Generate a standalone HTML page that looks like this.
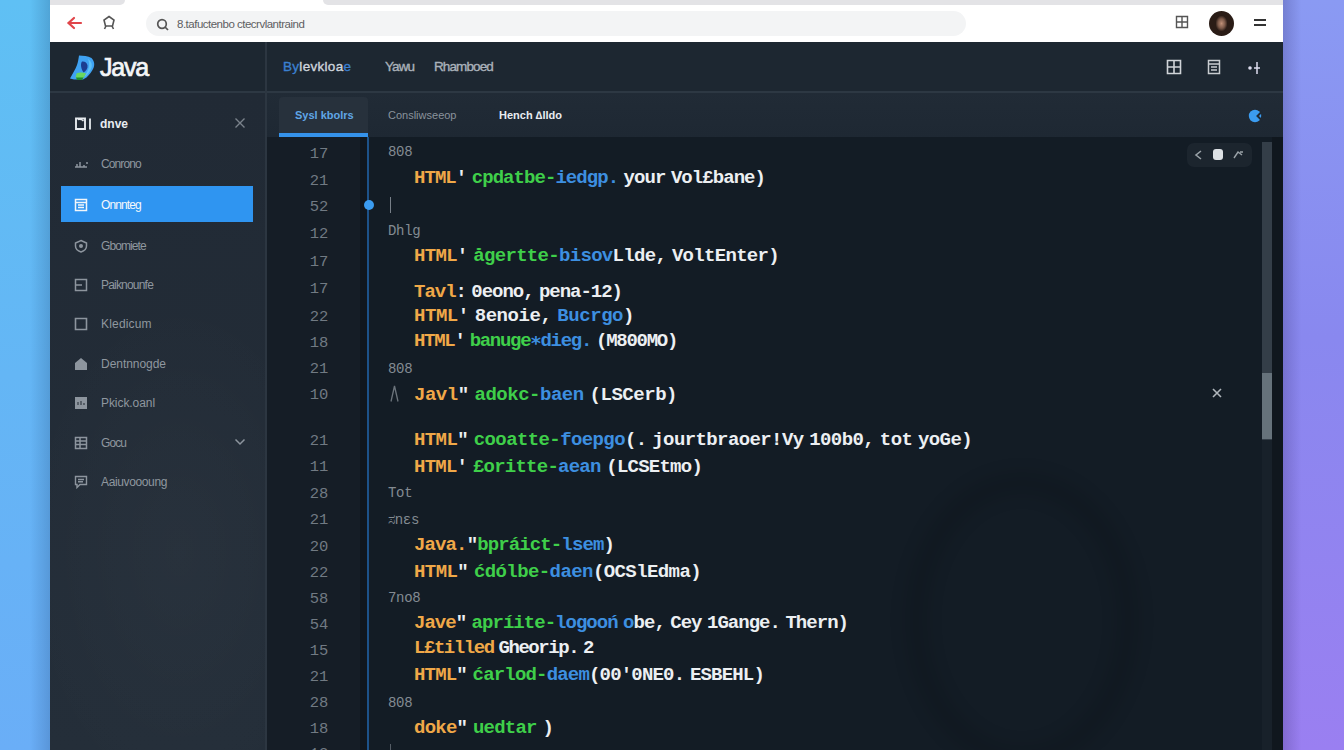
<!DOCTYPE html>
<html><head><meta charset="utf-8"><style>
*{margin:0;padding:0;box-sizing:border-box}
html,body{width:1344px;height:750px;overflow:hidden}
body{position:relative;font-family:"Liberation Sans",sans-serif;background:#7aa0f2}
.a{position:absolute}
.bgl{position:absolute;left:0;top:0;width:50px;height:750px;background:linear-gradient(90deg,rgba(0,0,0,0) 60%,rgba(0,20,60,0.16) 100%),linear-gradient(180deg,#5fc0f4,#64b6f5 50%,#6aaef7)}
.bgr{position:absolute;left:1283px;top:0;width:61px;height:750px;background:linear-gradient(90deg,rgba(20,10,60,0.18) 0%,rgba(0,0,0,0) 30%),linear-gradient(180deg,#8a9af3,#8988ef 45%,#9a7ff1)}
.win{position:absolute;left:50px;top:0;width:1233px;height:750px;background:#131c25;overflow:hidden}
.code{font-family:"Liberation Mono",monospace;font-weight:bold;font-size:19px;white-space:pre;line-height:20px;word-spacing:-5px}
.o{color:#f0a848}.g{color:#3fcf4a}.b{color:#3d8fe0}.w{color:#eceff2}
.c{font-family:"Liberation Mono",monospace;color:#838b92;font-size:14px;font-weight:normal;white-space:pre;line-height:16px}
.ln{font-family:"Liberation Mono",monospace;font-size:15.5px;color:#717a83;width:40px;text-align:center;line-height:16px}
.si{font-size:12px;color:#9aa3ad;line-height:16px;letter-spacing:-0.5px;white-space:pre}
</style></head><body>
<div class="bgl"></div><div class="bgr"></div>
<div class="win">
<div class="a" style="left:0px;top:0px;width:1233px;height:42px;background:#fff;"></div>
<div class="a" style="left:0px;top:0px;width:75px;height:5px;background:#e3e3e6;border-radius:0 0 8px 0"></div>
<div class="a" style="left:273px;top:0px;width:960px;height:5px;background:#e3e3e6;border-radius:0 0 0 8px"></div>
<div class="a" style="left:96px;top:11px;width:820px;height:25px;background:#f3f4f5;border-radius:13px"></div>
<svg class="a" style="left:15px;top:15px" width="18" height="16" viewBox="0 0 18 16"><path d="M16 8H4M9 3L3.5 8L9 13" stroke="#e0454a" stroke-width="2.2" fill="none" stroke-linecap="round"/></svg>
<svg class="a" style="left:51px;top:14px" width="16" height="18" viewBox="0 0 16 18"><path d="M8 2.5L13 6L11.5 12H4.5L3 6Z" stroke="#555" stroke-width="1.6" fill="none"/><path d="M5 12L3.5 15M11 12L12.5 15" stroke="#555" stroke-width="1.6"/></svg>
<svg class="a" style="left:106px;top:18px" width="14" height="14" viewBox="0 0 14 14"><circle cx="6" cy="6" r="4.3" stroke="#555" stroke-width="1.7" fill="none"/><path d="M9 9L12 12" stroke="#555" stroke-width="1.7"/></svg>
<div class="a " style="left:127px;top:17px;font-size:11.5px;color:#5e5e62;letter-spacing:-0.5px;line-height:14px">8.tafuctenbo ctecrvlantraind</div>
<svg class="a" style="left:1125px;top:15px" width="14" height="14" viewBox="0 0 14 14"><path d="M1.5 1.5H12.5V12.5H1.5ZM7 1.5V12.5M1.5 7H12.5" stroke="#555" stroke-width="1.4" fill="none"/></svg>
<div class="a" style="left:1159px;top:11px;width:25px;height:25px;background:radial-gradient(ellipse 6px 8px at 50% 50%,#c09078 0,#7a5848 60%,#2a1c16 100%),#1a120e;border-radius:50%"></div>
<div class="a" style="left:1204px;top:19px;width:12px;height:2px;background:#333;"></div>
<div class="a" style="left:1204px;top:24px;width:12px;height:2px;background:#333;"></div>
<div class="a" style="left:0px;top:42px;width:1233px;height:50px;background:#1d2731;"></div>
<div class="a" style="left:0px;top:92px;width:216px;height:658px;background:radial-gradient(ellipse 160px 260px at 60% 70%,rgba(255,255,255,0.025),rgba(255,255,255,0) 100%),linear-gradient(180deg,#212a35,#242e39);"></div>
<div class="a" style="left:216px;top:92px;width:1017px;height:45px;background:linear-gradient(180deg,#212b36,#1e2833);"></div>
<div class="a" style="left:216px;top:137px;width:102px;height:613px;background:#151d26;"></div>
<div class="a" style="left:310px;top:137px;width:7px;height:613px;background:#10171e;"></div>
<div class="a" style="left:0px;top:91px;width:1233px;height:2px;background:#2d3843;"></div>
<div class="a" style="left:215px;top:42px;width:2px;height:708px;background:#2c3641;"></div>
<svg class="a" style="left:19px;top:54px" width="28" height="27" viewBox="0 0 28 27"><path d="M10 1.5C14 1.5 19 2.2 22.5 4C25.5 7 25.8 11 24.5 14C23 17.5 20.5 20.5 17.5 23.5L14 25.5H5L1 24.5C3.5 20 6.5 15 8 11C9 8 9.6 4.5 10 1.5Z" fill="#3fa2f2"/><path d="M19 5C22 7 23.5 10 22.5 13.5C21.5 16.5 19.5 19.5 17 22L15 23.5C17 20 19.5 16 20 12.5C20.3 10 20 7 19 5Z" fill="#5ec0f6"/><path d="M13 7.5C15.5 7 18 8.5 18.5 11.5C19 14.5 17 17 14.5 18.5C13 16.5 12 13.5 12 11C12 9.5 12.3 8.3 13 7.5Z" fill="#1c3d90"/><path d="M7.5 19.5C10 18.5 14 18 17 19.5L14.5 24H6.5Z" fill="#6ad860"/><path d="M7 23.5H14.5L13 26H8Z" fill="#1d8a30"/></svg>
<div class="a " style="left:50px;top:52px;font-size:25px;color:#f4f6f8;line-height:30px;letter-spacing:-1.2px;-webkit-text-stroke:0.7px #f4f6f8">Java</div>
<div class="a " id="Nav1" style="left:233px;top:59px;font-size:13.5px;color:#cfd6de;line-height:16px;-webkit-text-stroke:0.35px currentColor;letter-spacing:0.300px"><span><span style="color:#3b80d0">By</span>levkloa<span style="color:#3b80d0">e</span></span></div>
<div class="a " id="Nav2" style="left:335px;top:59px;font-size:13.5px;color:#aab2ba;line-height:16px;-webkit-text-stroke:0.35px currentColor;letter-spacing:-0.900px"><span>Yawu</span></div>
<div class="a " id="Nav3" style="left:384px;top:59px;font-size:13.5px;color:#aab2ba;line-height:16px;-webkit-text-stroke:0.35px currentColor;letter-spacing:-0.900px"><span>Rhamboed</span></div>
<svg class="a" style="left:1116px;top:59px" width="16" height="16" viewBox="0 0 16 16"><path d="M1.5 1.5H14.5V14.5H1.5ZM8 1.5V14.5M1.5 8H14.5" stroke="#d0d4d8" stroke-width="1.6" fill="none"/></svg>
<svg class="a" style="left:1157px;top:59px" width="14" height="16" viewBox="0 0 14 16"><path d="M1.5 1.5H12.5V14.5H1.5ZM1.5 5H12.5M4 8H10M4 11H10" stroke="#c8ccd0" stroke-width="1.5" fill="none"/></svg>
<svg class="a" style="left:1196px;top:60px" width="16" height="16" viewBox="0 0 16 16"><circle cx="4" cy="8" r="1.8" fill="#dde"/><path d="M11 2V14M8 8H14" stroke="#dde" stroke-width="1.5"/></svg>
<svg class="a" style="left:24px;top:116px" width="18" height="16" viewBox="0 0 18 16"><path d="M2 2.5H11V13H2Z" stroke="#e6eaee" stroke-width="1.9" fill="none"/><path d="M4 3.5C6 3 8 3.5 9.5 5" stroke="#e6eaee" stroke-width="1.5" fill="none"/><path d="M16 2.5V13.5" stroke="#e6eaee" stroke-width="1.8"/></svg>
<div class="a " style="left:50px;top:116px;font-size:12px;color:#e8ecf0;font-weight:bold;line-height:16px">dnve</div>
<svg class="a" style="left:184px;top:117px" width="12" height="12" viewBox="0 0 12 12"><path d="M1.5 1.5L10.5 10.5M10.5 1.5L1.5 10.5" stroke="#7a838c" stroke-width="1.4"/></svg>
<div class="a" style="left:11px;top:186px;width:192px;height:36px;background:#2f95f1;"></div>
<svg class="a" style="left:24px;top:156.5px" width="14" height="14" viewBox="0 0 14 14"><path d="M1 10H13M3 10V7M6 10V5M10 10V8M12 6H14" stroke="#8d959e" stroke-width="1.5" fill="none"/></svg>
<div class="a si" id="SConrono" style="left:51px;top:155.5px;color:#8f979f;letter-spacing:-0.900px"><span>Conrono</span></div>
<svg class="a" style="left:24px;top:198px" width="14" height="14" viewBox="0 0 14 14"><path d="M1.5 1.5H12.5V12.5H1.5ZM1.5 4.5H12.5M4 7H10M4 9.5H10" stroke="#f2f6fa" stroke-width="1.5" fill="none"/></svg>
<div class="a si" id="SOnnnteg" style="left:51px;top:197px;color:#f4f8fc;letter-spacing:-0.900px"><span>Onnnteg</span></div>
<svg class="a" style="left:24px;top:238.5px" width="14" height="14" viewBox="0 0 14 14"><path d="M7 1.5L12.5 4V7C12.5 10 10 12 7 13C4 12 1.5 10 1.5 7V4Z" stroke="#8d959e" stroke-width="1.5" fill="none"/><circle cx="7" cy="7" r="2" fill="#8d959e"/></svg>
<div class="a si" id="SGbomiete" style="left:51px;top:237.5px;color:#8f979f;letter-spacing:-0.900px"><span>Gbomiete</span></div>
<svg class="a" style="left:24px;top:278px" width="14" height="14" viewBox="0 0 14 14"><path d="M1.5 1.5H12.5V12.5H1.5ZM1.5 7H8" stroke="#8d959e" stroke-width="1.5" fill="none"/></svg>
<div class="a si" id="SPaiknounfe" style="left:51px;top:277px;color:#8f979f;letter-spacing:-0.805px"><span>Paiknounfe</span></div>
<svg class="a" style="left:24px;top:316.5px" width="14" height="14" viewBox="0 0 14 14"><path d="M1.5 1.5H12.5V12.5H1.5Z" stroke="#8d959e" stroke-width="1.6" fill="none"/></svg>
<div class="a si" id="SKledicum" style="left:51px;top:315.5px;color:#8f979f;letter-spacing:0.179px"><span>Kledicum</span></div>
<svg class="a" style="left:24px;top:356.5px" width="14" height="14" viewBox="0 0 14 14"><path d="M7 1L13 6V13H1V6Z" fill="#8d959e"/></svg>
<div class="a si" id="SDentnnogde" style="left:51px;top:355.5px;color:#8f979f;letter-spacing:-0.040px"><span>Dentnnogde</span></div>
<svg class="a" style="left:24px;top:396px" width="14" height="14" viewBox="0 0 14 14"><path d="M1 1H13V13H1Z" fill="#8d959e"/><path d="M4 9V6M7 9V5M10 9V7" stroke="#3a434c" stroke-width="1.3"/></svg>
<div class="a si" id="SPkick.oanl" style="left:51px;top:395px;color:#8f979f;letter-spacing:-0.070px"><span>Pkick.oanl</span></div>
<svg class="a" style="left:24px;top:435.5px" width="14" height="14" viewBox="0 0 14 14"><path d="M1.5 1.5H12.5V12.5H1.5ZM6 1.5V12.5M1.5 5H12.5M1.5 8.5H12.5" stroke="#8d959e" stroke-width="1.5" fill="none"/></svg>
<div class="a si" id="SGocu" style="left:51px;top:434.5px;color:#8f979f;letter-spacing:-0.900px"><span>Gocu</span></div>
<svg class="a" style="left:24px;top:474.5px" width="14" height="14" viewBox="0 0 14 14"><path d="M1.5 1.5H12.5V9.5H6L3 12.5V9.5H1.5ZM4 4.5H10M4 6.8H9" stroke="#8d959e" stroke-width="1.4" fill="none"/></svg>
<div class="a si" id="SAaiuvoooung" style="left:51px;top:473.5px;color:#8f979f;letter-spacing:-0.370px"><span>Aaiuvoooung</span></div>
<svg class="a" style="left:184px;top:437px" width="12" height="10" viewBox="0 0 12 10"><path d="M1.5 2.5L6 7L10.5 2.5" stroke="#8d959e" stroke-width="1.5" fill="none"/></svg>
<div class="a" style="left:229px;top:97px;width:89px;height:40px;background:#27313c;border-radius:4px 4px 0 0"></div>
<div class="a" style="left:229px;top:133px;width:89px;height:4px;background:#3592ea;"></div>
<div class="a " style="left:245px;top:108px;font-size:11px;color:#5fa6e6;line-height:14px;font-weight:bold">Sysl kbolrs</div>
<div class="a " style="left:338px;top:108px;font-size:11px;color:#8a939c;line-height:14px">Consliwseeop</div>
<div class="a " style="left:449px;top:108px;font-size:11px;color:#e8ecf0;line-height:14px;font-weight:bold">Hench ∆lldo</div>
<svg class="a" style="left:1198px;top:109px" width="16" height="14" viewBox="0 0 16 14"><circle cx="7" cy="7" r="6.2" fill="#3b9cf0"/><path d="M14 2.5L9.5 7L14 11.5" stroke="#1f2934" stroke-width="2" fill="none"/></svg>
<div class="a ln" style="left:249px;top:146px;">17</div>
<div class="a ln" style="left:249px;top:173px;">21</div>
<div class="a ln" style="left:249px;top:199px;">52</div>
<div class="a ln" style="left:249px;top:226px;">12</div>
<div class="a ln" style="left:249px;top:254px;">17</div>
<div class="a ln" style="left:249px;top:281px;">17</div>
<div class="a ln" style="left:249px;top:309px;">22</div>
<div class="a ln" style="left:249px;top:335px;">18</div>
<div class="a ln" style="left:249px;top:361px;">21</div>
<div class="a ln" style="left:249px;top:387px;">10</div>
<div class="a ln" style="left:249px;top:433px;">21</div>
<div class="a ln" style="left:249px;top:459px;">11</div>
<div class="a ln" style="left:249px;top:486px;">28</div>
<div class="a ln" style="left:249px;top:512px;">21</div>
<div class="a ln" style="left:249px;top:539px;">20</div>
<div class="a ln" style="left:249px;top:565px;">22</div>
<div class="a ln" style="left:249px;top:591px;">58</div>
<div class="a ln" style="left:249px;top:617px;">54</div>
<div class="a ln" style="left:249px;top:643px;">15</div>
<div class="a ln" style="left:249px;top:669px;">21</div>
<div class="a ln" style="left:249px;top:695px;">28</div>
<div class="a ln" style="left:249px;top:721px;">18</div>
<div class="a ln" style="left:249px;top:746px;">12</div>
<div class="a" style="left:317px;top:137px;width:2px;height:613px;background:#1d5288;"></div>
<div class="a" style="left:314px;top:200px;width:10px;height:10px;background:#3b9cf0;border-radius:50%"></div>
<div class="a" style="left:340px;top:197px;width:1px;height:16px;background:#777f88;"></div>
<div class="a" style="left:340px;top:744px;width:1px;height:8px;background:#555d66;"></div>
<div class="a c" style="left:338px;top:144.2px;letter-spacing:-0.3px">808</div>
<div class="a c" style="left:338px;top:223.2px;letter-spacing:-0.3px">Dhlg</div>
<div class="a c" style="left:338px;top:361.2px;letter-spacing:-0.3px">808</div>
<div class="a c" style="left:338px;top:485.2px;letter-spacing:-0.3px">Tot</div>
<div class="a c" style="left:338px;top:512.2px;letter-spacing:-0.3px">ಸnεs</div>
<div class="a c" style="left:338px;top:590.2px;letter-spacing:-0.3px">7no8</div>
<div class="a c" style="left:338px;top:695.2px;letter-spacing:-0.3px">808</div>
<svg class="a" style="left:340px;top:385px" width="9" height="17" viewBox="0 0 9 17"><path d="M1 16.5L4.5 1L8 16.5" stroke="#6c747c" stroke-width="1.3" fill="none"/></svg>
<div class="a code" id="L0" style="left:364px;top:167.7px;letter-spacing:-0.946px"><span class="o">HTML</span><span class="w">' </span><span class="g">cpdatbe-</span><span class="b">iedgp.</span><span class="w"> your Vol£bane)</span></div>
<div class="a code" id="L1" style="left:364px;top:245.9px;letter-spacing:-0.688px"><span class="o">HTML</span><span class="w">' </span><span class="g">ågertte-</span><span class="b">bisov</span><span class="w">Llde, VoltEnter)</span></div>
<div class="a code" id="L2" style="left:364px;top:281.5px;letter-spacing:-1.022px"><span class="o">Tavl</span><span class="w">: 0eono, pena-12)</span></div>
<div class="a code" id="L3" style="left:364px;top:305.5px;letter-spacing:-0.451px"><span class="o">HTML</span><span class="w">' 8enoie, </span><span class="b">Bucrgo</span><span class="w">)</span></div>
<div class="a code" id="L4" style="left:364px;top:330.5px;letter-spacing:-1.293px"><span class="o">HTML</span><span class="w">' </span><span class="g">banuge</span><span class="b">∗dieg.</span><span class="w"> (M800MO)</span></div>
<div class="a code" id="L5" style="left:364px;top:384.8px;letter-spacing:-0.484px"><span class="o">Javl</span><span class="w">" </span><span class="g">adokc-</span><span class="b">baen</span><span class="w"> (LSCerb)</span></div>
<div class="a code" id="L6" style="left:364px;top:430.2px;letter-spacing:-0.606px"><span class="o">HTML</span><span class="w">" </span><span class="g">cooatte-</span><span class="b">foepgo</span><span class="w">(. jourtbraoer!Vy 100b0, tot yoGe)</span></div>
<div class="a code" id="L7" style="left:364px;top:456.5px;letter-spacing:-0.759px"><span class="o">HTML</span><span class="w">' </span><span class="g">£oritte-</span><span class="b">aean</span><span class="w"> (LCSEtmo)</span></div>
<div class="a code" id="L8" style="left:364px;top:535.0px;letter-spacing:-0.877px"><span class="o">Java.</span><span class="w">"</span><span class="g">bpráict-</span><span class="b">lsem</span><span class="w">)</span></div>
<div class="a code" id="L9" style="left:364px;top:561.5px;letter-spacing:-0.589px"><span class="o">HTML</span><span class="w">" </span><span class="g">ćdólbe-</span><span class="b">daen</span><span class="w">(OCSlEdma)</span></div>
<div class="a code" id="L10" style="left:364px;top:613.2px;letter-spacing:-0.971px"><span class="o">Jave</span><span class="w">" </span><span class="g">apríite-</span><span class="b">logooń o</span><span class="w">be, Cey 1Gange. Thern)</span></div>
<div class="a code" id="L11" style="left:364px;top:637.5px;letter-spacing:-1.455px"><span class="o">L£tilled</span><span class="w"> Gheorip. 2</span></div>
<div class="a code" id="L12" style="left:364px;top:665.1px;letter-spacing:-0.815px"><span class="o">HTML</span><span class="w">" </span><span class="g">ćarlod-</span><span class="b">daem</span><span class="w">(00'0NE0. ESBEHL)</span></div>
<div class="a code" id="L13" style="left:364px;top:718.3px;letter-spacing:-0.761px"><span class="o">doke</span><span class="w">" </span><span class="g">uedtar</span><span class="w"> )</span></div>
<div class="a" style="left:853px;top:470px;width:238px;height:300px;background:transparent;border-radius:50%;border:26px solid rgba(0,0,0,0.085);filter:blur(7px)"></div>
<div class="a" style="left:1222px;top:137px;width:11px;height:613px;background:#10171e;"></div>
<div class="a" style="left:1212px;top:142px;width:10px;height:608px;background:#18212a;"></div>
<div class="a" style="left:1212px;top:142px;width:10px;height:298px;background:#343e48;"></div>
<div class="a" style="left:1212px;top:373px;width:10px;height:66px;background:#66727b;"></div>
<div class="a" style="left:1137px;top:143px;width:65px;height:24px;background:#1c252e;border-radius:7px"></div>
<svg class="a" style="left:1143px;top:149px" width="12" height="12" viewBox="0 0 12 12"><path d="M8 2L3 6L8 10" stroke="#9aa2a8" stroke-width="1.6" fill="none"/></svg>
<div class="a" style="left:1163px;top:149px;width:10px;height:11px;background:#dde1e5;border-radius:3px"></div>
<svg class="a" style="left:1182px;top:149px" width="12" height="12" viewBox="0 0 12 12"><path d="M2 9L6 3L10 6M8 3H11" stroke="#9aa2a8" stroke-width="1.4" fill="none"/></svg>
<svg class="a" style="left:1161px;top:387px" width="12" height="12" viewBox="0 0 12 12"><path d="M2 2L10 10M10 2L2 10" stroke="#b0b6bc" stroke-width="1.6"/></svg>
</div>
</body></html>
